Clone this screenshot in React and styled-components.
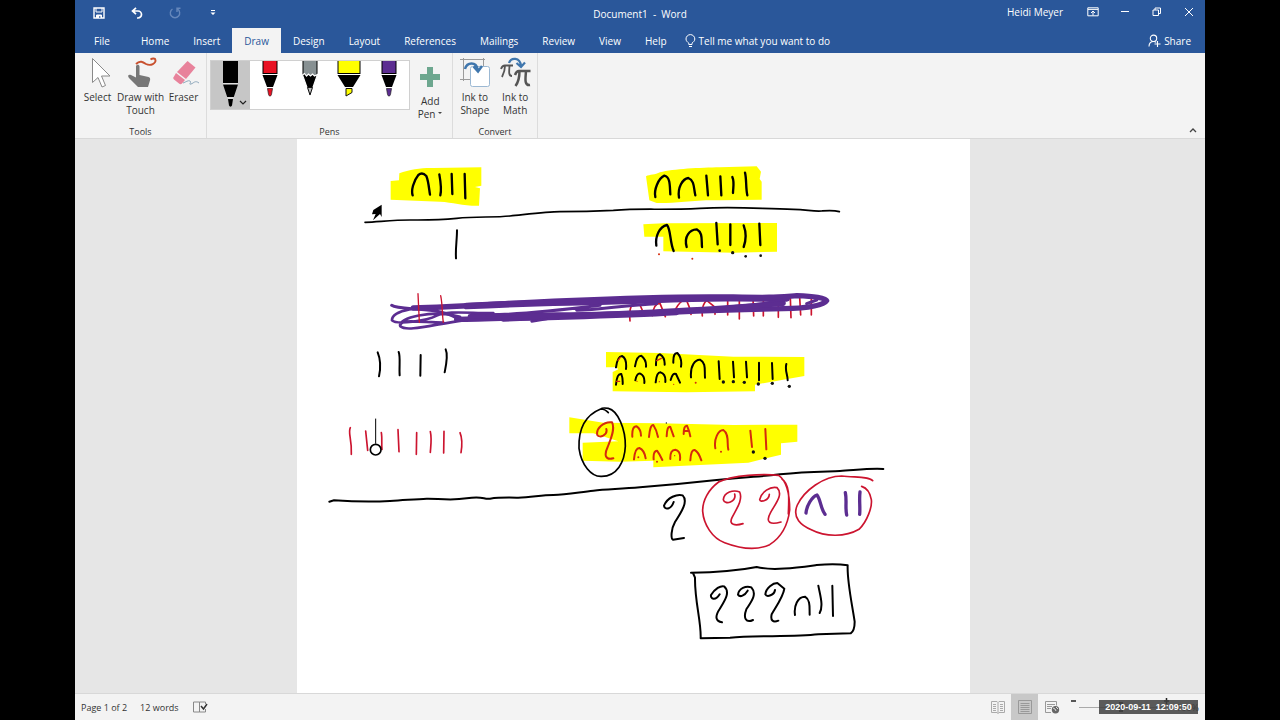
import React from 'react';
import styled, { createGlobalStyle, css } from 'styled-components';

const BLUE = '#2a579a';
const RED = '#cc142f';
const PURPLE = '#5c2d91';

const tabs = ['Home', 'Insert', 'Draw', 'Design', 'Layout', 'References', 'Mailings', 'Review', 'View', 'Help'];

export default () => (
    <>
        <GlobalStyle/>
        <Screen>
            <Window>
                <TitleBar>
                    <QuickAccess>
                        <IconButton aria-label="Save"><SaveIcon/></IconButton>
                        <IconButton aria-label="Undo"><UndoIcon/></IconButton>
                        <IconButton aria-label="Repeat" dim><RepeatIcon/></IconButton>
                        <IconButton aria-label="Customize"><CustomizeIcon/></IconButton>
                    </QuickAccess>
                    <Title>Document1&nbsp; -&nbsp; Word</Title>
                    <WindowControls>
                        <UserName>Heidi Meyer</UserName>
                        <ControlButton aria-label="Ribbon options"><RibbonOptionsIcon/></ControlButton>
                        <ControlButton aria-label="Minimize"><MinimizeIcon/></ControlButton>
                        <ControlButton aria-label="Restore"><RestoreIcon/></ControlButton>
                        <ControlButton aria-label="Close"><CloseIcon/></ControlButton>
                    </WindowControls>
                </TitleBar>
                <TabBar>
                    <Tab file>File</Tab>
                    {tabs.map(name => <Tab key={name} active={name === 'Draw' ? 1 : 0}>{name}</Tab>)}
                    <TellMe><BulbIcon/>Tell me what you want to do</TellMe>
                    <Share><ShareIcon/>Share</Share>
                </TabBar>
                <Ribbon>
                    <Group width={132}>
                        <Tools>
                            <Tool width={43}><SelectIcon/>Select</Tool>
                            <Tool width={43}><TouchIcon/>Draw with<br/>Touch</Tool>
                            <Tool width={43}><EraserIcon/>Eraser</Tool>
                        </Tools>
                        <GroupLabel>Tools</GroupLabel>
                    </Group>
                    <Group width={246}>
                        <Tools>
                            <Gallery>
                                <PenButton aria-label="Black pen" selected><BlackPen/></PenButton>
                                <PenButton aria-label="Red pen"><Pen color="#e81123"/></PenButton>
                                <PenButton aria-label="Pencil"><Pencil/></PenButton>
                                <PenButton aria-label="Highlighter"><Highlighter/></PenButton>
                                <PenButton aria-label="Purple pen"><Pen color={PURPLE}/></PenButton>
                            </Gallery>
                            <AddPen width={38}><PlusIcon/>Add<br/>Pen <Caret/></AddPen>
                        </Tools>
                        <GroupLabel>Pens</GroupLabel>
                    </Group>
                    <Group width={85}>
                        <Tools>
                            <Tool width={39}><ShapeIcon/>Ink to<br/>Shape</Tool>
                            <Tool width={39}><MathIcon/>Ink to<br/>Math</Tool>
                        </Tools>
                        <GroupLabel>Convert</GroupLabel>
                    </Group>
                    <Collapse aria-label="Collapse ribbon"><ChevronUp/></Collapse>
                </Ribbon>
                <Canvas>
                    <Paper><Ink/></Paper>
                </Canvas>
                <StatusBar>
                    <StatusText>Page 1 of 2</StatusText>
                    <StatusText>12 words</StatusText>
                    <ProofIcon/>
                    <Views>
                        <ViewButton aria-label="Read mode"><ReadIcon/></ViewButton>
                        <ViewButton aria-label="Print layout" selected><PrintIcon/></ViewButton>
                        <ViewButton aria-label="Web layout"><WebIcon/></ViewButton>
                    </Views>
                    <Zoom>
                        <ZoomButton aria-label="Zoom out"><Sign><path d="M1 3h5"/></Sign></ZoomButton>
                        <ZoomRange type="range" aria-label="Zoom" defaultValue="50"/>
                        <ZoomButton aria-label="Zoom in"><Sign><path d="M1 3h5M3.500 0v6"/></Sign></ZoomButton>
                        <ZoomValue>100%</ZoomValue>
                        <Stamp>2020-09-11&nbsp; 12:09:50</Stamp>
                    </Zoom>
                </StatusBar>
            </Window>
        </Screen>
    </>
);

const SaveIcon = () => (
    <svg width="12" height="12" viewBox="0 0 12 12" fill="none" stroke="#fff">
        <path d="M1 1h10v10H1z" strokeWidth="1.400"/>
        <path d="M3 1v4h6V1" />
        <path d="M3.500 11V8h5v3" fill="#fff"/>
        <path d="M6.800 9v2" stroke={BLUE}/>
    </svg>
);

const UndoIcon = () => (
    <svg width="12" height="12" viewBox="0 0 12 12" fill="none" stroke="#fff" strokeWidth="1.700">
        <path d="M5 .8 1.500 4 5 7.200M1.500 4H7a3.300 3.300 0 0 1 0 7H6"/>
    </svg>
);

const RepeatIcon = () => (
    <svg width="12" height="12" viewBox="0 0 12 12" fill="none" stroke="#7f9cc9" strokeWidth="1.400">
        <path d="M8.500 2A4.700 4.700 0 1 1 3.500 2M8 5V1.300h3.500"/>
    </svg>
);

const CustomizeIcon = () => (
    <svg width="6" height="6" viewBox="0 0 6 6" fill="#fff"><path d="M1 0h4v1H1zM.5 2.500h5L3 5z"/></svg>
);

const RibbonOptionsIcon = () => (
    <svg width="12" height="10" viewBox="0 0 12 10" fill="none" stroke="#fff">
        <path d="M.8.800h10.400v8H.8zM1 2.400h10M6 8.500V4.500M4 6l2-2 2 2"/>
    </svg>
);

const MinimizeIcon = () => (
    <svg width="10" height="10" viewBox="0 0 10 10" stroke="#fff"><path d="M1 4.500h8"/></svg>
);

const RestoreIcon = () => (
    <svg width="10" height="10" viewBox="0 0 10 10" fill="none" stroke="#fff">
        <path d="M1 3h5.500v5.500H1zM3 3V1h5.500v5.500h-2"/>
    </svg>
);

const CloseIcon = () => (
    <svg width="10" height="10" viewBox="0 0 10 10" stroke="#fff"><path d="m1 1 8 8M9 1 1 9"/></svg>
);

const BulbIcon = () => (
    <svg width="11" height="14" viewBox="0 0 11 14" fill="none" stroke="#fff">
        <path d="M3.800 10.500V9.200C2.500 8 1 7 1 5a4.300 4.300 0 0 1 8.800 0c0 2-1.500 3-2.800 4.200v1.300zM4 12.500h3"/>
    </svg>
);

const ShareIcon = () => (
    <svg width="13" height="14" viewBox="0 0 13 14" fill="none" stroke="#fff" strokeWidth="1.100">
        <circle cx="5.500" cy="4.300" r="3.200"/>
        <path d="M1 12.500C1 9 3 7.500 5.500 7.500c1 0 2 .3 2.700.9M9.500 7v6M6.500 10h6"/>
    </svg>
);

const SelectIcon = () => (
    <svg width="32" height="32" viewBox="0 0 32 32" fill="#fff" stroke="#8a8a8a">
        <path d="M10.500 1.500v24l5.500-5 4 9.500 3.500-1.500-4-9.500H28z"/>
    </svg>
);

const TouchIcon = () => (
    <svg width="32" height="32" viewBox="0 0 32 32" fill="none">
        <path d="M11 9.500c0-2.300 3.500-2.300 3.500 0V18l9 2c1.500.4 1.800 1.500 1.600 3L23 30H13l-9-9c-2-3 0-4 2-3l5 2.500z" fill="#777"/>
        <path d="M11 7c4-4 7-2 10 0 5 2.500 10-1 9.500-4-.3-2.200-3.500-1.500-5-.5" stroke="#c8502e" strokeWidth="1.900"/>
    </svg>
);

const EraserIcon = () => (
    <svg width="32" height="32" viewBox="0 0 32 32" fill="none">
        <path d="m19.500 4 8 6.500L18 22l-9-7z" fill="#e8829b"/>
        <path d="m8 16 9 7-3 3.500c-1 1-2 1-3 0l-5-4c-1-1-1-2 0-3z" fill="#e8829b"/>
        <path d="M15 26c3-1 5-3 7-2s-2 4 1 3 4-4 8-1" stroke="#8da7bb"/>
    </svg>
);

const PlusIcon = () => (
    <svg width="32" height="32" viewBox="0 0 32 32" fill="#6da78f"><path d="M13 6h6v7h7v6h-7v7h-6v-7H6v-6h7z"/></svg>
);

const Caret = () => (
    <svg width="5" height="5" viewBox="0 0 5 5" fill="#444"><path d="M0 1h4L2 3z"/></svg>
);

const ShapeIcon = () => (
    <svg width="32" height="32" viewBox="0 0 32 32" fill="none" stroke="#9b9b9b">
        <path d="M4.500 1v23M1 2.500h25M1 22.500h10M24.500 1v8"/>
        <rect x="11.500" y="9.500" width="19" height="20" rx="2" fill="#fff" stroke="#9bb8d3"/>
        <path d="M6 12c2-7 11-8 13 1M14.500 9.500l4.500 5 4-5.500" stroke="#3f76ad" strokeWidth="2.500"/>
    </svg>
);

const MathIcon = () => (
    <svg width="32" height="32" viewBox="0 0 32 32" fill="none" stroke="#555" strokeWidth="1.800">
        <path d="M2 12c1-3 2-3.500 4-3.500h8M6 9c0 5-1 7-3 11M10.500 9c-.5 6-1 10 2.500 10"/>
        <path d="M16 18c1-3 2-4 4-4h11.500M20.500 14c0 7-1 11-4 15M27 14c-.5 7-2 15 4 14" strokeWidth="2.500"/>
        <path d="M10 6c2-6 11-6 12 3M17.500 6l4.500 4 4-4.500" stroke="#3f76ad" strokeWidth="2.200"/>
    </svg>
);

const ChevronUp = () => (
    <svg width="8" height="8" viewBox="0 0 8 8" fill="none" stroke="#444" strokeWidth="1.300"><path d="m1 6 3-3 3 3"/></svg>
);

const BlackPen = () => (
    <svg width="40" height="48" viewBox="0 0 40 48">
        <path d="M13 0h15v22H13zM13 23.500h15L23.800 36h-6.600zM18 38h5l-1 6.500c-.5 1.500-2.500 1.500-3 0z"/>
        <path d="M13 22.700h15M17.500 37h6" stroke="#eee" strokeWidth=".8"/>
        <path d="m30 40 3 3 3-3" fill="none" stroke="#222" strokeWidth="1.200"/>
    </svg>
);

const Pen = ({ color }) => (
    <svg width="40" height="48" viewBox="0 0 40 48">
        <path d="M12.500 0h15v13h-15z"/>
        <path d="M13.500 0h13v12h-13z" fill={color}/>
        <path d="M12.500 14h15L23 26h-6z"/>
        <path d="M17.500 27.500h5l-1 6c-.5 2-2.500 2-3 0z" fill={color} stroke="#222" strokeWidth=".7"/>
    </svg>
);

const Pencil = () => (
    <svg width="40" height="48" viewBox="0 0 40 48">
        <path d="M12.500 0h15v14h-15z"/>
        <path d="M13.500 0h13v14h-13z" fill="#879092"/>
        <path d="m12.500 14 2-1.500 2 2.500 2-2 2 2 2-2 2 2 3-1.500L20 35z" stroke="#fff" strokeWidth="1.200"/>
        <path d="M17.500 26.500h5L20 34z" fill="#bbb" stroke="#111"/>
    </svg>
);

const Highlighter = () => (
    <svg width="40" height="48" viewBox="0 0 40 48">
        <path d="M8.500 0h23v13h-23z"/>
        <path d="M9.500 0h21v12h-21z" fill="#ff0"/>
        <path d="M8.500 14h23L24 26h-8z"/>
        <path d="M17 27.500h6v4L17 35z" fill="#ff0" stroke="#111"/>
    </svg>
);

const ProofIcon = () => (
    <svg width="16" height="14" viewBox="0 0 16 14" fill="none" stroke="#888">
        <path d="M7.500 2v10H1.500V2zM7.500 2h6v2M7.500 12h6V9"/>
        <path d="m9 6 2.500 3L15 4" stroke="#333" strokeWidth="1.500"/>
    </svg>
);

const ReadIcon = () => (
    <svg width="16" height="14" viewBox="0 0 16 14" fill="none" stroke="#aaa">
        <path d="M8 2.500v11L7 12.500H1.500v-11H7zl1-1h5.500v11H9l-1 1M3 4.500h3M3 6.500h3M3 8.500h3M3 10.500h3M10 4.500h3M10 6.500h3M10 8.500h3M10 10.500h3"/>
    </svg>
);

const PrintIcon = () => (
    <svg width="16" height="14" viewBox="0 0 16 14" fill="none" stroke="#999">
        <path d="M1.500.500h13v13h-13zM3.500 3.500h9M3.500 5.500h9M3.500 7.500h9M3.500 9.500h9M3.500 11.500h9"/>
    </svg>
);

const WebIcon = () => (
    <svg width="16" height="14" viewBox="0 0 16 14" fill="none" stroke="#999">
        <path d="M7 12.500H1.500v-11h11v4M3 4.500h8M3 6.500h5M3 8.500h4"/>
        <circle cx="11.500" cy="9.800" r="3.700" fill="#666" stroke="none"/>
        <path d="m9 8 2 1 1 2M12 7l2 2" stroke="#ddd"/>
    </svg>
);

// drawn on a grid three times finer than the page
const Ink = () => (
    <InkSvg viewBox="891 417 2019 1662" role="img" aria-label="Handwritten multiplication">
        <g transform="translate(1080 465)">
            <path className="mark" d="M92 78 117 76 118 55C150 42 190 38 220 39L364 37V92L345 96 360 100 357 152C310 153 280 142 240 140L92 134z"/>
            <path d="M158 121C153 108 160 78 175 60Q187 50 199 63C206 80 207 102 210 119M238 58C241 75 245 105 241 121M275 57 277 117M314 57 316 130" strokeWidth="7"/>
            <path d="M15 202C60 200 100 195 150 195S230 196 290 190 400 188 450 183 560 170 600 170 700 169 760 166C850 159 900 166 1020 160S1200 162 1300 163C1340 164 1360 170 1385 168S1420 165 1438 170" strokeWidth="5"/>
            <path d="M291 226C291 255 286 280 288 310" strokeWidth="6"/>
            <path d="M65 149 40 165 36 178 47 177 39 196 60 177 65 186z" fill="#000" stroke="none"/>
        </g>
        <g transform="translate(1800 465)">
            <path className="mark" d="M138 64C150 58 165 60 180 52 220 42 300 38 360 37L470 34 483 50 479 72 485 80V134L360 136C280 134 220 146 170 144L148 136z"/>
            <path d="M166 126C161 105 175 70 193 62 212 66 209 95 211 118M237 128C232 98 248 71 265 69 284 76 281 101 286 121M319 62 324 121M361 64 364 121M397 66C404 82 399 99 399 114M435 53C440 72 437 100 442 121" strokeWidth="7"/>
            <path className="mark" d="M130 208 190 205 531 204V290L400 293 190 289V245H133z"/>
            <path d="M169 272C165 245 178 215 201 210 213 225 209 260 221 288M260 276C251 244 269 224 290 223 309 233 304 254 306 276M349 204 353 268M391 208V270M431 211C440 235 436 262 431 276M478 206 481 270" strokeWidth="7"/>
            <g className="dots"><circle cx="359" cy="287" r="4"/><circle cx="398" cy="293" r="5"/><circle cx="437" cy="304" r="4"/><circle cx="482" cy="302" r="4"/></g>
            <g className="red dots"><circle cx="177" cy="298" r="3"/><circle cx="277" cy="311" r="3"/></g>
            <path className="red" d="M90 498C88 475 90 458 96 450H120L128 468M157 482C158 460 168 444 180 445L196 485M227 462Q245 430 260 437 269 455 273 478M307 483C305 460 312 443 320 436L342 454M345 460V478M383 435V480M418 438V492M459 430 461 483M490 430V483M535 450V487M571 428 573 488M599 426 602 480M634 428V480" strokeWidth="5"/>
        </g>
        <g transform="translate(1080 465)" className="purple">
            <path d="M160 459C300 455 400 447 620 437S1000 424 1120 426 1240 427 1310 422C1360 424 1398 428 1400 437 1390 453 1330 460 1270 461S1080 465 1010 468 800 477 720 479 400 493 290 493" strokeWidth="16"/>
            <path d="M330 484C600 477 700 480 860 471S1120 459 1270 443M430 493C620 486 780 485 950 474" strokeWidth="14"/>
            <path d="M320 453C560 440 650 445 880 435S1080 432 1280 430" strokeWidth="20"/>
            <path d="M95 451C120 469 220 450 290 489M650 466C720 465 800 449 890 446M1080 459C1150 450 1200 451 1265 436M380 479C450 480 550 472 720 451M1370 435 1340 446" strokeWidth="9"/>
            <path d="M1080 462 1270 446" strokeWidth="14"/>
            <path d="M290 457C170 450 95 467 96 496 110 510 200 498 230 482S330 475 400 474M300 485C220 463 110 488 121 514 140 532 220 508 310 496M121 514C118 492 160 500 250 503M515 499 560 492" strokeWidth="8"/>
        </g>
        <g transform="translate(1080 465)" className="red">
            <path d="M174 416 178 502M242 422C248 450 246 478 250 502" strokeWidth="4"/>
        </g>
        <g transform="translate(960 1005)">
            <path d="M173 52C184 78 181 105 177 124M236 51C242 65 237 94 239 121M302 60 301 122M377 43C385 60 378 92 374 112" strokeWidth="6"/>
            <path className="red" d="M91 278C83 294 96 310 94 358M137 288 143 346M184 293C187 310 184 330 186 343M234 284 237 350M290 293 289 358M331 290C336 312 332 335 331 352M372 289 371 354M420 293C427 310 426 335 423 353" strokeWidth="5"/>
            <path d="M167 252V325" strokeWidth="3"/>
            <circle cx="167" cy="344" r="16" fill="#fff" strokeWidth="5"/>
        </g>
        <g transform="translate(1680 1020)">
            <path className="mark" d="M138 36 300 39 520 50 733 51V108L585 134V154L380 157 158 154V96L175 88 169 82 138 82z"/>
            <path className="mark" d="M28 232 130 248 300 250 520 255 712 254V305L663 310V344L565 368 420 375 280 382V362L180 365 68 362V308L175 304 100 280 28 280z"/>
            <path d="M168 82Q172 50 186 48 201 55 198 87M225 79Q230 47 244 47 260 60 258 80M288 76Q287 45 300 43 315 52 314 74M340 68Q339 38 352 39 367 55 363 80M168 134Q171 99 184 102 189 115 188 132M226 121Q230 99 241 101 255 108 253 129M287 127Q290 96 302 97 318 102 316 126M332 120Q338 97 348 102L360 128M393 112C390 75 407 58 420 59 439 69 433 90 435 113M476 64 479 117M519 65 522 112M558 65 561 112M597 68V121M636 69 638 117M679 72C674 92 683 102 683 121" strokeWidth="6"/>
            <g className="dots"><circle cx="490" cy="126" r="5"/><circle cx="520" cy="125" r="5"/><circle cx="553" cy="127" r="5"/><circle cx="595" cy="132" r="5"/><circle cx="637" cy="130" r="5"/><circle cx="688" cy="139" r="5"/><circle cx="580" cy="336" r="5"/><circle cx="615" cy="355" r="5"/><circle cx="319" cy="249" r="2"/></g>
            <path className="orange" d="M181 52 174 61M290 62 304 55M169 124H179" strokeWidth="4"/>
            <g className="orange dots"><circle cx="231" cy="124" r="2"/><circle cx="298" cy="125" r="2"/><circle cx="341" cy="133" r="2"/><circle cx="407" cy="128" r="3"/><circle cx="483" cy="335" r="3"/><circle cx="235" cy="352" r="3"/><circle cx="291" cy="365" r="3"/><circle cx="344" cy="347" r="2"/></g>
            <path className="orange" d="M139 267C144 286 118 295 112 285 107 267 130 244 156 247 167 268 150 302 143 321 132 344 135 362 160 355M217 290Q215 259 230 259 243 268 243 287M267 291Q270 254 280 255 290 270 294 291M320 289Q321 257 331 261L341 289M371 282Q371 256 381 257 389 276 391 289M373 273H386M222 358Q225 324 238 324 253 330 257 355M281 358Q279 333 291 332 300 344 307 360M331 357Q330 329 346 329 363 332 360 360M391 361Q393 327 404 330 415 335 424 361M466 325C461 297 475 270 490 270 509 282 500 313 505 329M571 272 576 321M616 267 619 328" strokeWidth="6"/>
            <path d="M122 207C75 226 55 270 57 325 64 374 93 411 125 409 171 409 194 366 196 319 197 268 174 212 145 205Q127 202 122 207 135 207 145 218" strokeWidth="5"/>
        </g>
        <path transform="translate(960 1005)" d="M28 500 42 496C100 500 160 501 210 498S290 492 320 491 390 498 440 490 490 494 510 491 550 487 590 488 660 480 700 480 780 471 820 467 900 462 960 457 1080 447 1190 435 1300 427 1380 418 1520 410 1560 408 1650 399 1690 402" strokeWidth="6"/>
        <g transform="translate(1920 1380)">
            <path d="M101 126C93 150 73 150 72 137 82 112 112 101 128 106 146 124 123 158 105 186 93 207 92 237 99 239L132 234" strokeWidth="6"/>
            <path className="red" d="M284 102C290 125 255 137 250 119 252 97 280 88 299 96 310 120 287 150 276 173 265 195 286 198 309 191M388 103C387 121 361 129 359 119 364 96 391 78 411 83 430 102 410 126 392 157 374 189 392 195 423 186M236 66C206 88 187 121 188 154 191 192 216 235 254 248 309 269 354 270 389 254 427 230 444 191 449 150 449 103 439 62 416 46 369 41 280 45 236 66M426 57C452 75 446 125 445 162M698 62C685 48 645 53 605 48 551 48 493 91 472 135 455 174 485 197 514 209 554 230 615 233 657 208 682 184 697 140 694 119 690 96 678 83 665 79" strokeWidth="5"/>
            <path className="purple" d="M498 159C500 137 515 111 531 105 542 119 542 146 555 163M616 98C621 121 615 142 620 165M660 96C657 119 661 139 659 163" strokeWidth="10"/>
            <path d="M153 338Q270 337 350 321C398 334 478 322 530 315 564 312 599 312 623 316 621 364 635 425 644 485Q644 512 632 520L535 523C460 532 342 525 270 533L182 535C184 485 164 425 165 353L159 339" strokeWidth="6"/>
            <path d="M239 403C226 424 211 417 213 405 225 386 242 376 252 379 272 396 255 421 239 447 223 471 228 484 246 487M323 392C314 407 300 413 294 404 296 385 318 376 334 382 352 402 335 423 319 448 309 474 318 490 339 480M405 390C403 405 381 413 376 403 378 383 399 369 412 369L433 386C430 410 408 440 395 463 391 480 398 489 415 482M465 465C461 438 473 410 495 410 512 420 508 443 509 464M535 377C540 405 551 437 539 459M577 377 579 468" strokeWidth="6"/>
        </g>
    </InkSvg>
);

const GlobalStyle = createGlobalStyle`
  body {
    margin: 0;
    background: #000;
    font-family: "Open Sans", "Noto Sans", sans-serif;
  }
  * {
    box-sizing: border-box;
  }
  button {
    font: inherit;
    color: inherit;
    border: none;
    background: none;
    padding: 0;
    margin: 0;
  }
  svg {
    flex: none;
  }
`;

const Screen = styled.div`
  min-height: 100vh;
  padding: 0 75px;
  display: flex;
`;

const Window = styled.div`
  flex: 1;
  min-width: 0;
  display: flex;
  flex-direction: column;
  font-size: 10px;
  color: #333;
`;

const TitleBar = styled.header`
  height: 28px;
  display: grid;
  grid-template-columns: 1fr auto 1fr;
  align-items: center;
  background-color: ${BLUE};
  color: #fff;
`;

const QuickAccess = styled.div`
  display: flex;
  align-self: start;
  padding-left: 5px;
`;

const IconButton = styled.button.withConfig({ shouldForwardProp: p => p !== 'dim' })`
  width: 38px;
  height: 26px;
  display: flex;
  align-items: center;
  justify-content: center;
  ${props => props.dim && css`
    opacity: 0.7;
  `}
`;

const Title = styled.div`
  font-size: 10px;
`;

const WindowControls = styled.div`
  display: flex;
  justify-content: flex-end;
  align-items: center;
  height: 24px;
  align-self: start;
`;

const ControlButton = styled.button`
  width: 32px;
  height: 24px;
  display: flex;
  align-items: center;
  justify-content: center;
`;

const UserName = styled.span`
  margin-right: 14px;
`;

const TabBar = styled.nav`
  height: 25px;
  display: flex;
  background-color: ${BLUE};
  color: #fff;
`;

const Tab = styled.button.withConfig({ shouldForwardProp: p => p !== 'active' && p !== 'file' })`
  padding: 0 12px;
  ${props => props.file && css`
    width: 54px;
  `}
  ${props => props.active && css`
    background-color: #f3f3f3;
    color: ${BLUE};
  `}
`;

const TellMe = styled.button`
  margin-left: 6px;
  display: flex;
  align-items: center;
  gap: 3px;
`;

const Share = styled.button`
  margin-left: auto;
  padding-right: 14px;
  display: flex;
  align-items: center;
  gap: 3px;
`;

const Ribbon = styled.section`
  height: 86px;
  display: flex;
  background-color: #f3f3f3;
  border-bottom: 1px solid #d8d8d8;
`;

const Group = styled.div`
  width: ${props => props.width}px;
  padding: 4px 1px 0;
  border-right: 1px solid #dcdcdc;
  display: flex;
  flex-direction: column;
`;

const Tools = styled.div`
  display: flex;
  justify-content: space-evenly;
  flex: 1;
`;

const Tool = styled.button`
  width: ${props => props.width}px;
  display: flex;
  flex-direction: column;
  align-items: center;
  align-self: flex-start;
  line-height: 13px;
  text-align: center;
  white-space: nowrap;
  svg {
    margin-bottom: 2px;
  }
`;

const AddPen = styled(Tool)`
  display: block;
  padding-top: 4px;
  > svg:first-child {
    display: block;
    margin: 0 auto 2px;
  }
`;

const GroupLabel = styled.div`
  font-size: 9px;
  line-height: 13px;
  text-align: center;
`;

const Gallery = styled.div`
  display: flex;
  width: 200px;
  height: 50px;
  margin-top: 3px;
  border: 1px solid #d0d0d0;
  background-color: #fff;
`;

const PenButton = styled.button.withConfig({ shouldForwardProp: p => p !== 'selected' })`
  flex: 1;
  min-width: 0;
  display: flex;
  justify-content: center;
  ${props => props.selected && css`
    background-color: #c6c6c6;
  `}
`;

const Collapse = styled.button`
  margin-left: auto;
  align-self: flex-end;
  width: 24px;
  height: 16px;
`;

const Canvas = styled.main`
  flex: 1;
  display: flex;
  justify-content: center;
  padding-right: 14px;
  background-color: #e6e6e6;
`;

const Paper = styled.article`
  width: 673px;
  background-color: #fff;
`;

const InkSvg = styled.svg`
  display: block;
  width: 100%;
  fill: none;
  stroke: #000;
  stroke-linecap: round;
  stroke-linejoin: round;
  .mark {
    fill: #ff0;
    stroke: none;
  }
  .red {
    stroke: ${RED};
  }
  .orange {
    stroke: #d52b0c;
  }
  .purple, &.purple {
    stroke: ${PURPLE};
  }
  .dots {
    fill: #111;
    stroke: none;
  }
  .red.dots, .orange.dots {
    fill: #d52b0c;
  }
`;

const StatusBar = styled.footer`
  height: 27px;
  display: flex;
  align-items: center;
  gap: 13px;
  padding-left: 6px;
  background-color: #f3f3f3;
  border-top: 1px solid #d8d8d8;
`;

const StatusText = styled.span`
  font-size: 9px;
`;

const Views = styled.div`
  margin-left: auto;
  display: flex;
`;

const ViewButton = styled.button.withConfig({ shouldForwardProp: p => p !== 'selected' })`
  width: 27px;
  height: 26px;
  display: flex;
  align-items: center;
  justify-content: center;
  ${props => props.selected && css`
    background-color: #c8c8c8;
  `}
`;

const Zoom = styled.div`
  position: relative;
  width: 140px;
  height: 26px;
  margin-left: -13px;
  padding-left: 5px;
  display: flex;
  align-items: center;
`;

const ZoomButton = styled.button`
  width: 9px;
  height: 18px;
  display: flex;
`;

const Sign = styled.svg.attrs({ viewBox: '0 0 7 7', width: 7, height: 7 })`
  stroke: #222;
  stroke-width: 1.5;
`;

const ZoomRange = styled.input`
  appearance: none;
  width: 84px;
  height: 1px;
  margin: 0;
  background: #aaa;
  &::-webkit-slider-thumb {
    appearance: none;
    width: 4px;
    height: 10px;
    background: #444;
  }
`;

const ZoomValue = styled.span`
  margin-left: 4px;
  font-size: 9px;
`;

// recording clock laid over the zoom controls
const Stamp = styled.time`
  position: absolute;
  right: 7px;
  top: 6px;
  width: 99px;
  height: 14px;
  line-height: 14px;
  text-align: center;
  font-family: "Liberation Sans", sans-serif;
  font-weight: bold;
  font-size: 9px;
  color: #fff;
  background-color: rgba(64, 64, 64, 0.86);
`;
